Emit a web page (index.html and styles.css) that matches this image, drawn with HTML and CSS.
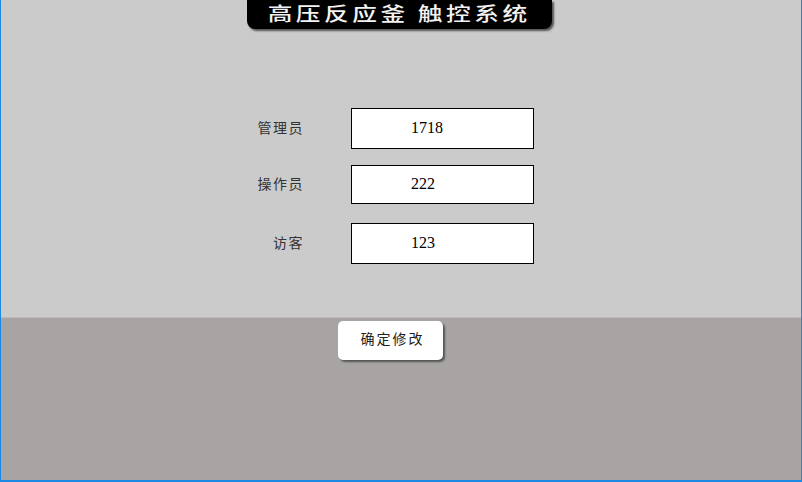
FILE: index.html
```html
<!DOCTYPE html>
<html lang="zh-CN">
<head>
    <meta charset="UTF-8">
    <meta name="viewport" content="width=device-width, initial-scale=1.0">
    <title>高压反应釜 触控系统</title>
    <link rel="stylesheet" href="styles.css">
</head>
<body>
    <div class="frame">
        <div class="top">
            <h1 class="title"><span class="title-text">高压反应釜 触控系统</span></h1>
            <form class="form">
                <div class="row row-admin">
                    <label for="admin">管理员</label>
                    <input type="text" id="admin" value="1718">
                </div>
                <div class="row row-operator">
                    <label for="operator">操作员</label>
                    <input type="text" id="operator" value="222">
                </div>
                <div class="row row-guest">
                    <label for="guest">访客</label>
                    <input type="text" id="guest" value="123">
                </div>
            </form>
        </div>
        <div class="bottom">
            <button type="button" class="confirm">确定修改</button>
        </div>
    </div>
</body>
</html>
```

FILE: styles.css
```css
html, body {
    margin: 0;
    padding: 0;
    height: 100%;
    overflow: hidden;
}
body {
    font-family: "Noto Sans CJK SC", "Liberation Serif", serif;
    color: #222;
}
.frame {
    box-sizing: border-box;
    height: 482px;
    display: flex;
    flex-direction: column;
    border-left: 1px solid #1e88e5;
    border-right: 1px solid #1e88e5;
    border-bottom: 2px solid #1e88e5;
}
.top {
    height: 318px;
    background-color: #cbcbcb;
    display: flex;
    flex-direction: column;
    border-bottom: 1px solid #bdbbba;
    box-sizing: border-box;
}
.title {
    box-sizing: border-box;
    width: 305px;
    height: 29px;
    margin: 0 0 0 246px;
    background-color: #000;
    color: #f2f2f2;
    font-size: 19px;
    font-weight: 500;
    line-height: 25px;
    text-align: center;
    white-space: nowrap;
    border-radius: 0 0 8px 8px;
    box-shadow: 2px 2px 2px #555;
}
.title-text {
    display: inline-block;
    letter-spacing: 2.7px;
    transform: scaleX(1.3);
}
.form {
    display: flex;
    flex-direction: column;
    margin: 79px 0 0 0;
}
.row {
    display: flex;
    align-items: center;
}
.row-operator {
    margin-top: 16px;
}
.row-guest {
    margin-top: 19px;
}
.row label {
    width: 303px;
    padding-bottom: 3px;
    font-size: 14px;
    letter-spacing: 1.5px;
    text-align: right;
    color: #333;
}
.row input {
    box-sizing: border-box;
    width: 183px;
    height: 41px;
    margin-left: 47px;
    padding: 0 0 2px 59px;
    border: 1px solid #000;
    border-radius: 0;
    background-color: #fff;
    font-family: "Liberation Serif", serif;
    font-size: 16px;
    color: #000;
    outline: none;
}
.row-operator input {
    height: 39px;
}
.bottom {
    flex: 1;
    background-color: #a8a4a3;
    padding: 3px 0 0 337px;
}
.confirm {
    width: 105px;
    height: 39px;
    padding: 0 0 6px 4px;
    border: none;
    border-radius: 5px;
    background-color: #fff;
    box-shadow: 2px 2px 2px #555;
    font-family: "Noto Sans CJK SC", sans-serif;
    font-size: 14px;
    letter-spacing: 2px;
    color: #222;
}
```
